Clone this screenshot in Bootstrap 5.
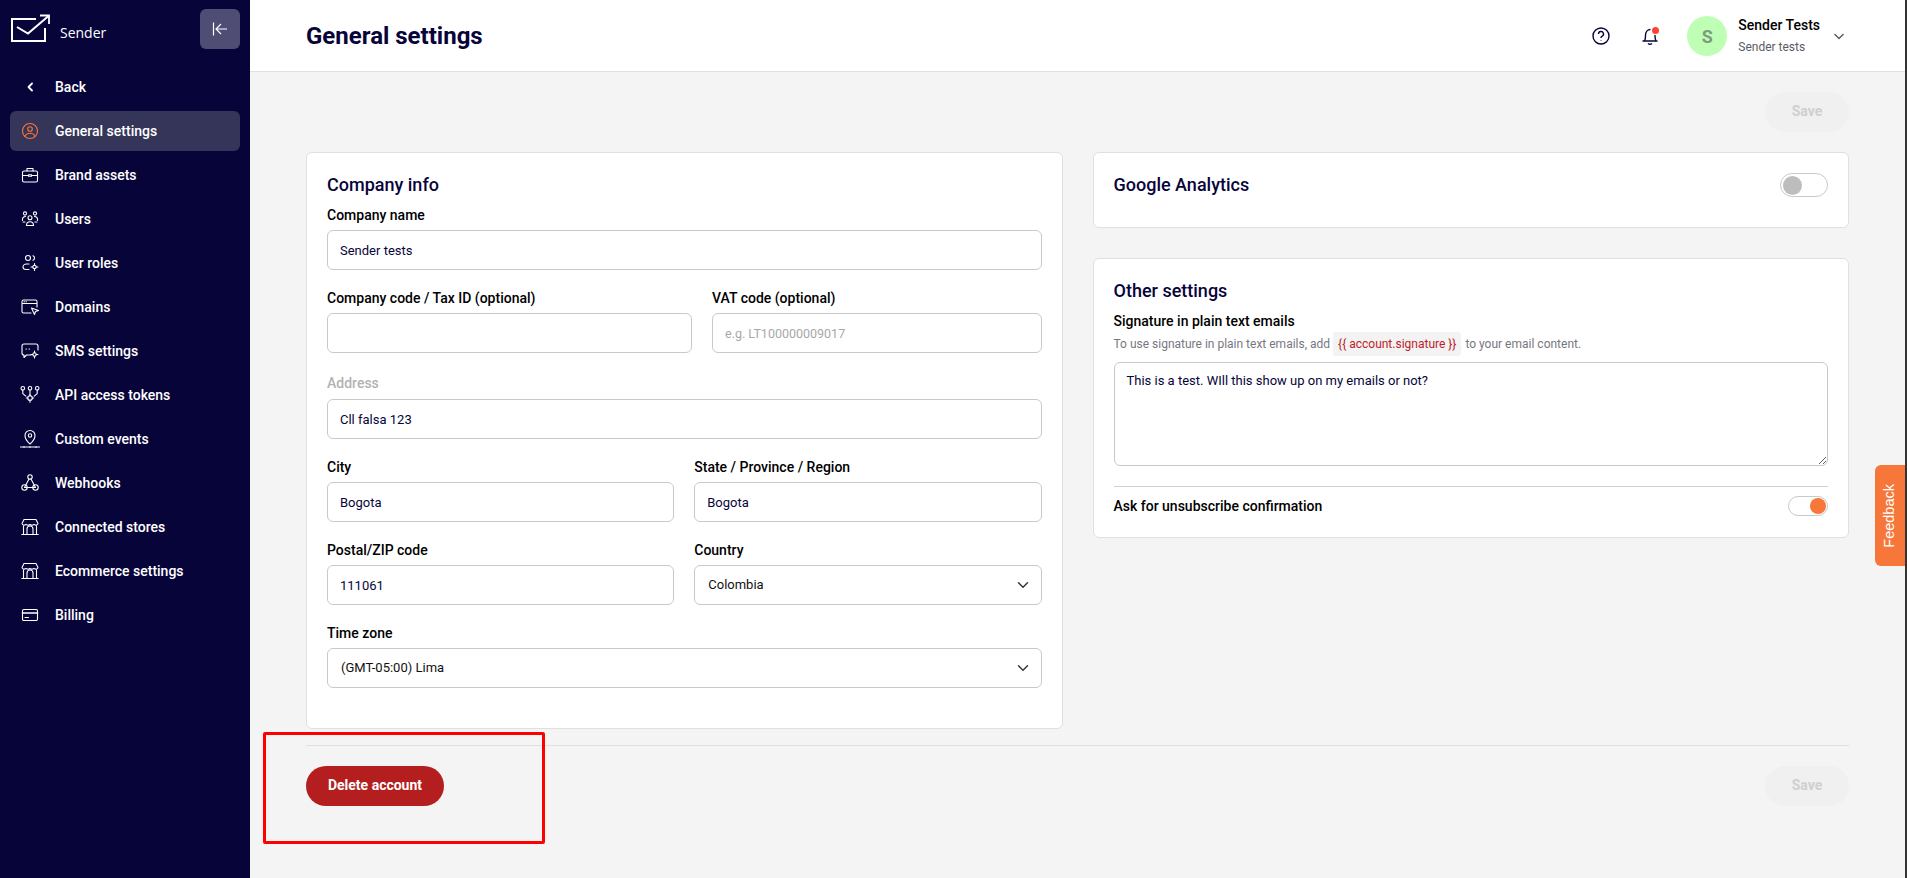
<!DOCTYPE html>
<html lang="en">
<head>
    <meta charset="UTF-8">
    <meta name="viewport" content="width=device-width, initial-scale=1.0">
    <title>General settings</title>
    <link rel="stylesheet" href="https://cdn.jsdelivr.net/npm/bootstrap@5.3.0/dist/css/bootstrap.min.css">
    <style>
        html, body { height: 100%; }
        body { font-family: Roboto, "Liberation Sans", sans-serif; font-size: 13px; color: #07043a; background: #333; overflow: hidden; }
        .app-wrap { height: 878px; width: 1905px; background: #f4f4f4; }
        .side-bar { width: 250px; flex: none; background: #07043a; color: #fff; }
        .side-top { height: 59px; padding: 9px 10px 0 10px; }
        .logo-wrap { height: 40px; }
        .logo-name { font-family: "Open Sans", sans-serif; font-size: 14px; margin-left: 10px; margin-top: 6px; }
        .collapse-btn { width: 40px; height: 40px; background: #4f4d74; border: 0; border-radius: 6px; }
        .side-menu { padding: 8px 10px 0; }
        .side-link { height: 40px; margin-bottom: 4px; padding-left: 10px; color: #fff; text-decoration: none; font-size: 14px; font-weight: 500; border-radius: 6px; }
        .side-link svg { width: 20px; height: 20px; margin-right: 15px; flex: none; fill: none; stroke: #fff; stroke-width: 1.1; stroke-linecap: round; stroke-linejoin: round; }
        .side-link.is-active { background: #353459; }
        .side-link.is-active svg { stroke: #f7763a; }
        .top-bar { height: 72px; background: #fff; border-bottom: 1px solid #e0e0e0; padding: 1px 60px 0 56px; }
        .page-title { font-size: 24px; font-weight: 700; margin: 0; color: #07043a; }
        .bell-wrap { margin: 0 27px 0 29px; }
        .dot-alert { width: 7px; height: 7px; right: 1px; top: 1px; background: #ff4136; }
        .user-pic { width: 40px; height: 40px; background: #bfffb5; color: #7c9c7c; font-weight: 700; font-size: 18px; }
        .user-text { margin-left: 11px; }
        .user-name { font-size: 14px; font-weight: 500; color: #000; line-height: 16px; }
        .user-org { font-size: 12px; color: #5b5b66; line-height: 16px; margin-top: 6px; }
        .user-caret { margin-left: 13px; }
        .page-body { padding: 20px 56px 0; }
        .save-off { width: 84px; height: 40px; background: #f0f0f0; color: #cfcfcf; border: 0; border-radius: 20px; font-size: 14px; font-weight: 700; padding: 0 0 2px; }
        .form-cols { --bs-gutter-x: 30px; margin-top: 20px; }
        .box { background: #fff; border: 1px solid #e0e0e0; border-radius: 6px; }
        .box-info { height: 577px; padding: 20px 20px 0; }
        .box-ga { height: 76px; padding: 20px 20px 0; margin-bottom: 30px; }
        .box-other { height: 280px; padding: 20px 20px 0; }
        .box-title { font-size: 18px; font-weight: 500; line-height: 24px; margin: 0; color: #07043a; }
        .box-title.title-gap { margin-bottom: 8px; }
        .field-label { display: block; font-size: 14px; font-weight: 500; color: #000; line-height: 20px; margin-bottom: 5px; }
        .field-label.is-muted { color: #b2b2b2; margin-bottom: 6px; }
        .form-control, .form-select { height: 40px; font-size: 13px; color: #07043a; border: 1px solid #c9c9c9; border-radius: 6px; padding: 0 12px; }
        .form-select { color: #111; padding: 0 36px 0 13px; background-position: right 10px center; }
        .form-control::placeholder { color: #a8a8a8; font-size: 12.5px; }
        .field-group { margin-top: 18px; }
        .field-group.first-group { margin-top: 8px; }
        .field-group.addr-group { margin-top: 20px; }
        .field-row { gap: 20px; }
        .code-col { flex: 0 0 365px; }
        .half-col { flex: 1 1 0; min-width: 0; }
        .help-line { font-size: 12px; color: #77777f; margin-top: 1px; line-height: 24px; white-space: nowrap; }
        .var-chip { display: inline-block; background: #f3f3f3; color: #c0202a; padding: 0 5px; margin: 0 1px 0 0; border-radius: 3px; }
        .sig-area { height: 104px; margin-top: 6px; padding: 8px 12px; resize: both; }
        .rule-line { height: 1px; background: #d0d0d0; margin: 20px 0 0; }
        .ask-row { margin-top: 9px; }
        .toggle-big, .toggle-small { display: block; border: 1px solid #c9c9c9; border-radius: 20px; background: #fff; flex: none; position: relative; }
        .toggle-big { width: 48px; height: 24px; }
        .toggle-big::after { content: ""; position: absolute; left: 2px; top: 2px; width: 19px; height: 19px; border-radius: 50%; background: #bdbdbd; }
        .toggle-small { width: 40px; height: 20px; }
        .toggle-small::after { content: ""; position: absolute; right: 1px; top: 1px; width: 16px; height: 16px; border-radius: 50%; background: #f7763a; }
        .bottom-rule { height: 1px; background: #e0e0e0; margin-top: 16px; }
        .bottom-bar { margin-top: 20px; }
        .btn-delete { width: 138px; height: 40px; padding: 0 0 2px; background: #b41e1e; border: 0; color: #fff; border-radius: 20px; font-size: 14px; font-weight: 700; }
        .feedback-tab { position: absolute; left: 1875px; top: 465px; width: 30px; height: 101px; background: #f7763a; color: #fff; border-radius: 6px 0 0 6px; font-family: "Liberation Sans", sans-serif; font-size: 14.5px; }
        .feedback-tab span { transform: rotate(-90deg); }
        .mark-box { position: absolute; left: 263px; top: 732px; width: 282px; height: 112px; border: 3px solid #ff0000; border-radius: 2px; }
    </style>
</head>
<body>
    <div class="app-wrap d-flex position-relative">
        <aside class="side-bar">
            <div class="side-top d-flex justify-content-between">
                <div class="logo-wrap d-flex align-items-center">
                    <svg width="40" height="30" viewBox="0 0 40 30" fill="none" stroke="#fff" stroke-width="2">
                        <path d="M26 5H2v22h33V14"/>
                        <path d="M7 13l11 6.500L38.500 2"/>
                        <path d="M30 1.500h9v8.500" stroke-width="1.800"/>
                    </svg>
                    <span class="logo-name">Sender</span>
                </div>
                <button class="collapse-btn d-flex align-items-center justify-content-center" type="button" aria-label="Collapse">
                    <svg width="16" height="16" viewBox="0 0 16 16" fill="none" stroke="#fff" stroke-width="1.200"><path d="M1.500 1.500v13M15 8H4.500M9 3L4 8l5 5"/></svg>
                </button>
            </div>
            <nav class="side-menu">
                <a class="side-link d-flex align-items-center" href="#"><svg viewBox="0 0 20 20"><path d="M12 6.500L8.500 10l3.500 3.500" stroke-width="1.800"/></svg>Back</a>
                <a class="side-link is-active d-flex align-items-center" href="#"><svg viewBox="0 0 20 20"><circle cx="10" cy="10" r="7.500"/><circle cx="10" cy="8" r="2.300"/><path d="M5 15.500c.8-2.400 2.600-3.200 5-3.200s4.200.8 5 3.200"/></svg>General settings</a>
                <a class="side-link d-flex align-items-center" href="#"><svg viewBox="0 0 20 20"><rect x="2.500" y="6" width="15" height="11" rx="1.500"/><path d="M7 6V3.500h6V6M2.500 10.500h6M11.500 10.500h6M8.500 9.800h3v1.500h-3z"/></svg>Brand assets</a>
                <a class="side-link d-flex align-items-center" href="#"><svg viewBox="0 0 20 20"><circle cx="10" cy="8.800" r="2"/><path d="M6.500 16.500c0-2.500 1.500-3.800 3.500-3.800s3.500 1.300 3.500 3.800z"/><circle cx="5" cy="4.500" r="1.600"/><circle cx="15" cy="4.500" r="1.600"/><path d="M2.500 11.500c-.5-2.500 1-4 3-4M17.500 11.500c.5-2.500-1-4-3-4M5 13H3M15 13h2"/></svg>Users</a>
                <a class="side-link d-flex align-items-center" href="#"><svg viewBox="0 0 20 20"><circle cx="8" cy="5" r="2.500"/><path d="M13 2.700a2.500 2.500 0 0 1 0 4.600M9 11H6.500c-2 0-3.500 1.300-3.500 3s1.500 2.500 3 2.500H9"/><circle cx="14.500" cy="14" r="1.700"/><path d="M14.500 10.500v1.800M14.500 15.700v1.800M11 14h1.800M16.200 14H18"/></svg>User roles</a>
                <a class="side-link d-flex align-items-center" href="#"><svg viewBox="0 0 20 20"><path d="M11 16H3.500A1.500 1.500 0 0 1 2 14.500V4.500A1.500 1.500 0 0 1 3.500 3h12A1.500 1.500 0 0 1 17 4.500V10M2 6.500h15M4 4.800h.5M6 4.800h.5"/><path d="M11.500 11l7 2.500-3 1-1 3z"/></svg>Domains</a>
                <a class="side-link d-flex align-items-center" href="#"><svg viewBox="0 0 20 20"><path d="M11 14H6.500L4 16.500V14A2 2 0 0 1 2 12V5a2 2 0 0 1 2-2h12a2 2 0 0 1 2 2v4"/><path d="M6 8h.5M9 8h.5"/><circle cx="14.500" cy="13.500" r="1.700"/><path d="M14.500 10v1.800M14.500 15.200V17M11 13.500h1.800M16.200 13.500H18"/></svg>SMS settings</a>
                <a class="side-link d-flex align-items-center" href="#"><svg viewBox="0 0 20 20"><circle cx="2.800" cy="3.300" r="1.800"/><circle cx="10" cy="3.300" r="1.800"/><circle cx="17.200" cy="3.300" r="1.800"/><path d="M2.800 5.100v3.500l3 2.500M10 5.100v5M17.200 5.100v3.500l-3 2.500"/><circle cx="10" cy="13" r="2.300"/><path d="M10 9.500v1.200M10 15.300v2M6.300 13h1.400M12.300 13h1.400"/></svg>API access tokens</a>
                <a class="side-link d-flex align-items-center" href="#"><svg viewBox="0 0 20 20"><path d="M10 15s-5-4.300-5-8.500a5 5 0 0 1 10 0C15 10.700 10 15 10 15z"/><circle cx="10" cy="6.500" r="1.700"/><path d="M.5 18h19M4 17.500v1M10 17.500v1M16 17.500v1"/></svg>Custom events</a>
                <a class="side-link d-flex align-items-center" href="#"><svg viewBox="0 0 20 20"><circle cx="10" cy="4" r="2.200"/><circle cx="4.500" cy="14.500" r="2.700"/><circle cx="15.500" cy="14.500" r="2.700"/><path d="M9 6L4.500 14.500M11 6l4.500 8.500M4.500 14.500h11"/></svg>Webhooks</a>
                <a class="side-link d-flex align-items-center" href="#"><svg viewBox="0 0 20 20"><path d="M4 2.500h12l2 4a2 2 0 0 1-2.700 1.500L14 7.500l-2 .8-2-.8-2 .8-2-.8L4.700 8A2 2 0 0 1 2 6.500zM3.500 9v8M16.500 9v8M1.800 17.500h16.400M7 17.500V12a3 3 0 0 1 6 0v5.500"/></svg>Connected stores</a>
                <a class="side-link d-flex align-items-center" href="#"><svg viewBox="0 0 20 20"><path d="M4 2.500h12l2 4a2 2 0 0 1-2.700 1.500L14 7.500l-2 .8-2-.8-2 .8-2-.8L4.700 8A2 2 0 0 1 2 6.500zM3.500 9v8M16.500 9v8M1.800 17.500h16.400M7 17.500V12a3 3 0 0 1 6 0v5.500"/></svg>Ecommerce settings</a>
                <a class="side-link d-flex align-items-center" href="#"><svg viewBox="0 0 20 20"><rect x="2.500" y="4.500" width="15" height="11" rx="1.200"/><path d="M2.500 8h15" stroke-width="1.600"/><path d="M5 12.500h3.500"/></svg>Billing</a>
            </nav>
        </aside>

        <main class="flex-grow-1">
            <header class="top-bar d-flex align-items-center justify-content-between">
                <h1 class="page-title">General settings</h1>
                <div class="d-flex align-items-center">
                    <svg width="20" height="20" viewBox="0 0 20 20" fill="none" stroke="#07043a" stroke-width="1.400"><circle cx="10" cy="10" r="8"/><path d="M7.500 8a2.500 2.500 0 1 1 3.700 2.200c-.8.400-1.200.9-1.200 1.800M10 14v.6"/></svg>
                    <div class="position-relative bell-wrap">
                        <svg class="d-block" width="20" height="20" viewBox="0 0 20 20" fill="none" stroke="#07043a" stroke-width="1.400"><path d="M2.500 15h15M4.500 15c1-1.500 1-3 1-5.500C5.500 6 7.500 3.500 10.500 3.500M15 9v1c0 2.500.3 3.500 1 5M8 17.500c1 .8 3 .8 4 0"/></svg>
                        <span class="position-absolute rounded-circle dot-alert"></span>
                    </div>
                    <div class="user-pic rounded-circle d-flex align-items-center justify-content-center">S</div>
                    <div class="user-text">
                        <div class="user-name">Sender Tests</div>
                        <div class="user-org">Sender tests</div>
                    </div>
                    <svg class="user-caret" width="12" height="12" viewBox="0 0 12 12" fill="none" stroke="#555" stroke-width="1.300"><path d="M1.500 4l4.500 4.500L10.500 4"/></svg>
                </div>
            </header>

            <div class="page-body">
                <div class="d-flex justify-content-end">
                    <button class="save-off" type="button" disabled>Save</button>
                </div>
                <div class="row form-cols">
                    <div class="col-6">
                        <section class="box box-info">
                            <h2 class="box-title">Company info</h2>
                            <div class="field-group first-group">
                                <label class="field-label">Company name</label>
                                <input class="form-control" type="text" value="Sender tests">
                            </div>
                            <div class="field-group field-row d-flex">
                                <div class="code-col">
                                    <label class="field-label">Company code / Tax ID (optional)</label>
                                    <input class="form-control" type="text">
                                </div>
                                <div class="half-col">
                                    <label class="field-label">VAT code (optional)</label>
                                    <input class="form-control" type="text" placeholder="e.g. LT100000009017">
                                </div>
                            </div>
                            <div class="field-group addr-group">
                                <label class="field-label is-muted">Address</label>
                                <input class="form-control" type="text" value="Cll falsa 123">
                            </div>
                            <div class="field-group field-row d-flex">
                                <div class="half-col">
                                    <label class="field-label">City</label>
                                    <input class="form-control" type="text" value="Bogota">
                                </div>
                                <div class="half-col">
                                    <label class="field-label">State / Province / Region</label>
                                    <input class="form-control" type="text" value="Bogota">
                                </div>
                            </div>
                            <div class="field-group field-row d-flex">
                                <div class="half-col">
                                    <label class="field-label">Postal/ZIP code</label>
                                    <input class="form-control" type="text" value="111061">
                                </div>
                                <div class="half-col">
                                    <label class="field-label">Country</label>
                                    <select class="form-select"><option>Colombia</option></select>
                                </div>
                            </div>
                            <div class="field-group">
                                <label class="field-label">Time zone</label>
                                <select class="form-select"><option>(GMT-05:00) Lima</option></select>
                            </div>
                        </section>
                    </div>
                    <div class="col-6">
                        <section class="box box-ga d-flex justify-content-between">
                            <h2 class="box-title">Google Analytics</h2>
                            <span class="toggle-big"></span>
                        </section>
                        <section class="box box-other">
                            <h2 class="box-title title-gap">Other settings</h2>
                            <label class="field-label mb-0">Signature in plain text emails</label>
                            <div class="help-line">To use signature in plain text emails, add <span class="var-chip">{{ account.signature }}</span> to your email content.</div>
                            <textarea class="form-control sig-area">This is a test. WIll this show up on my emails or not?</textarea>
                            <div class="rule-line"></div>
                            <div class="ask-row d-flex justify-content-between align-items-center">
                                <span class="field-label mb-0">Ask for unsubscribe confirmation</span>
                                <span class="toggle-small"></span>
                            </div>
                        </section>
                    </div>
                </div>
                <div class="bottom-rule"></div>
                <div class="bottom-bar d-flex justify-content-between">
                    <button class="btn-delete" type="button">Delete account</button>
                    <button class="save-off" type="button" disabled>Save</button>
                </div>
            </div>
        </main>

        <div class="feedback-tab d-flex align-items-center justify-content-center"><span>Feedback</span></div>
        <div class="mark-box"></div>
    </div>
    <script src="https://cdn.jsdelivr.net/npm/bootstrap@5.3.0/dist/js/bootstrap.bundle.min.js"></script>
</body>
</html>
